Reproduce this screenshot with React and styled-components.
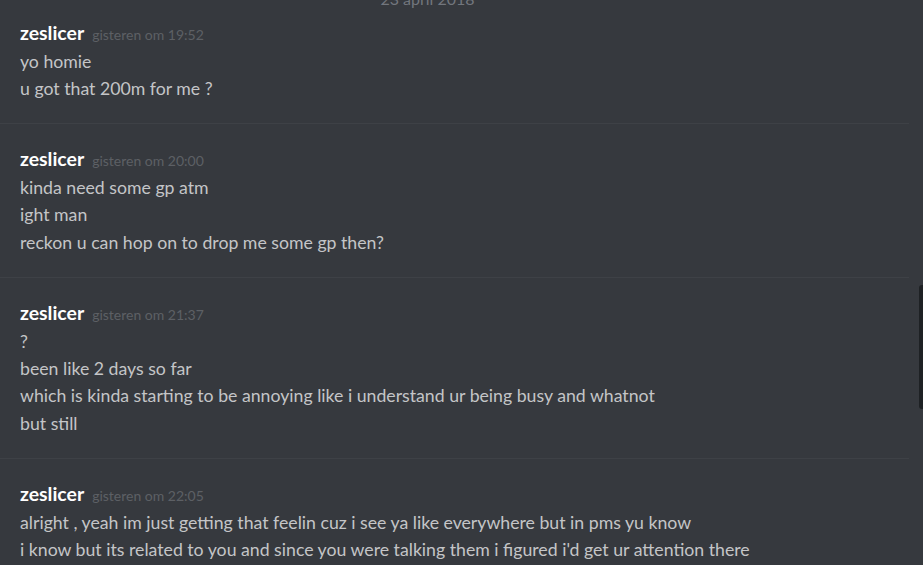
import React from "react";
import styled, { createGlobalStyle } from "styled-components";

const Global = createGlobalStyle`
  html, body { margin: 0; padding: 0; background: #36393e; }
  body { font-family: Lato, "Noto Sans", "Open Sans", sans-serif; overflow: hidden; }
`;

const Page = styled.div`
  display: flex;
  width: 923px;
  height: 565px;
  background: #36393e;
  overflow: hidden;
`;

const Messages = styled.div`
  flex: 1;
  display: flex;
  flex-direction: column;
  padding-right: 10px;
  margin-top: -10px;
`;

const DateHeader = styled.div`
  text-align: center;
  color: #72767d;
  font-size: 16px;
  line-height: 18px;
  padding-right: 54px;
`;

const Group = styled.div`
  padding: ${(p) => (p.$first ? "13px" : "23px")} 0 21px 20px;
  border-bottom: ${(p) => (p.$last ? "none" : "1px solid #3e4146")};
`;

const Header = styled.div`
  display: flex;
  align-items: baseline;
  gap: 8px;
  height: 26.5px;
`;

const Name = styled.span`
  color: #ffffff;
  font-weight: 700;
  font-size: 19.4px;
`;

const Time = styled.span`
  color: #5d6065;
  font-size: 14px;
`;

const Line = styled.div`
  color: #c4c5c7;
  font-size: 17.7px;
  line-height: 27.4px;
`;

const Track = styled.div`
  width: 4px;
  display: flex;
  flex-direction: column;
  padding-top: 285px;
`;

const Thumb = styled.div`
  width: 4px;
  height: 124px;
  background: #1e2124;
  border-radius: 3px 0 0 3px;
`;

const data = [
  { time: "gisteren om 19:52", lines: ["yo homie", "u got that 200m for me ?"] },
  { time: "gisteren om 20:00", lines: ["kinda need some gp atm", "ight man", "reckon u can hop on to drop me some gp then?"] },
  {
    time: "gisteren om 21:37",
    lines: [
      "?",
      "been like 2 days so far",
      "which is kinda starting to be annoying like i understand ur being busy and whatnot",
      "but still",
    ],
  },
  {
    time: "gisteren om 22:05",
    lines: [
      "alright , yeah im just getting that feelin cuz i see ya like everywhere but in pms yu know",
      "i know but its related to you and since you were talking them i figured i'd get ur attention there",
    ],
  },
];

export default function App() {
  return (
    <Page>
      <Global />
      <Messages>
        <DateHeader>23 april 2018</DateHeader>
        {data.map((g, i) => (
          <Group key={i} $first={i === 0} $last={i === data.length - 1}>
            <Header>
              <Name>zeslicer</Name>
              <Time>{g.time}</Time>
            </Header>
            {g.lines.map((l, j) => (
              <Line key={j}>{l}</Line>
            ))}
          </Group>
        ))}
      </Messages>
      <Track>
        <Thumb />
      </Track>
    </Page>
  );
}
